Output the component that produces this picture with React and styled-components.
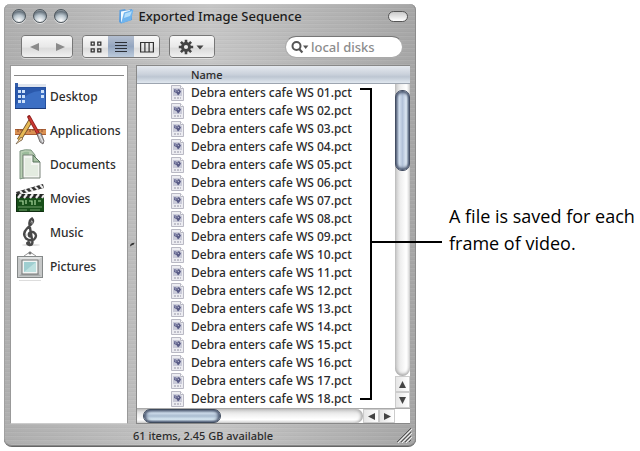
import { useState } from 'react';
import styled, { createGlobalStyle } from 'styled-components';

const places = [
  { name: 'Desktop', Icon: DesktopIcon },
  { name: 'Applications', Icon: ApplicationsIcon },
  { name: 'Documents', Icon: DocumentsIcon },
  { name: 'Movies', Icon: MoviesIcon },
  { name: 'Music', Icon: MusicIcon },
  { name: 'Pictures', Icon: PicturesIcon },
];

const files = Array.from({ length: 18 }, (_, i) => {
  return `Debra enters cafe WS ${String(i + 1).padStart(2, '0')}.pct`;
});

export default function App() {
  const [view, setView] = useState('list');
  const [search, setSearch] = useState('');

  return (
    <Page>
      <GlobalStyle />

      <Window>
        <TitleBar>
          <Lights>
            <Light aria-label="Close" />
            <Light aria-label="Minimize" />
            <Light aria-label="Zoom" />
          </Lights>
          <Title>
            <FolderIcon />
            Exported Image Sequence
          </Title>
          <Pill aria-label="Hide toolbar" />
        </TitleBar>

        <Toolbar>
          <ButtonGroup>
            <ToolButton $width={25} aria-label="Back">
              <svg width="10" height="10"><path d="M9 1v8L0 5z" fill="#8b8b8b" /></svg>
            </ToolButton>
            <ToolButton $width={25} aria-label="Forward">
              <svg width="10" height="10"><path d="M1 1v8l9-4z" fill="#8b8b8b" /></svg>
            </ToolButton>
          </ButtonGroup>

          <ButtonGroup>
            <ToolButton $width={25} $active={view === 'icon'} onClick={() => setView('icon')} aria-label="Icon view">
              <svg width="12" height="12" fill="none" stroke="#333" strokeWidth="1.3">
                <path d="M1.2 1.2h3v3h-3zM7.8 1.2h3v3h-3zM1.2 7.8h3v3h-3zM7.8 7.8h3v3h-3z" />
              </svg>
            </ToolButton>
            <ToolButton $width={26} $active={view === 'list'} onClick={() => setView('list')} aria-label="List view">
              <svg width="12" height="12" stroke="#2b2f36" strokeWidth="1.2">
                <path d="M0 1.5h12M0 4.5h12M0 7.5h12M0 10.5h12" />
              </svg>
            </ToolButton>
            <ToolButton $width={25} $active={view === 'column'} onClick={() => setView('column')} aria-label="Column view">
              <svg width="14" height="12" fill="none" stroke="#333" strokeWidth="1.2">
                <path d="M.6 1.5h12.8v9.5H.6zM4.9 1.5V11M9.1 1.5V11" />
              </svg>
            </ToolButton>
          </ButtonGroup>

          <ButtonGroup>
            <ToolButton $width={44} aria-label="Action">
              <GearIcon />
            </ToolButton>
          </ButtonGroup>

          <SearchBox>
            <svg width="18" height="14" fill="none" stroke="#555">
              <circle cx="5.5" cy="6" r="4" strokeWidth="2" />
              <path d="M8.2 9l3.2 3.4" strokeWidth="2.2" />
              <path d="M12 5.5h5.4L14.7 9z" fill="#555" stroke="none" />
            </svg>
            <SearchInput
              aria-label="Search"
              placeholder="local disks"
              value={search}
              onChange={e => setSearch(e.target.value)}
            />
          </SearchBox>
        </Toolbar>

        <Panes>
          <Sidebar>
            {
              places.map(({ name, Icon }) => (
                <Place key={name}>
                  <Icon />
                  {name}
                </Place>
              ))
            }
          </Sidebar>

          <Splitter>
            <svg width="5" height="5"><path d="M0 4.5Q0 .8 4.5.8Q4.5 3 2 3.2z" fill="#333" /></svg>
          </Splitter>

          <FilePane>
            <ListArea>
              <FileTable>
                <thead>
                  <tr>
                    <IconHead />
                    <NameHead>Name</NameHead>
                  </tr>
                </thead>
                <tbody>
                  {
                    files.map(file => (
                      <tr key={file}>
                        <IconCell><PictIcon /></IconCell>
                        <NameCell>{file}</NameCell>
                      </tr>
                    ))
                  }
                </tbody>
              </FileTable>

              <ScrollColumn>
                <HeadCap />
                <VerticalTrack>
                  <VerticalThumb />
                </VerticalTrack>
                <ArrowButton aria-label="Scroll up">
                  <svg width="7" height="7"><path d="M3.5 0L7 7H0z" fill="#444" /></svg>
                </ArrowButton>
                <ArrowButton aria-label="Scroll down">
                  <svg width="7" height="7"><path d="M3.5 7L7 0H0z" fill="#444" /></svg>
                </ArrowButton>
              </ScrollColumn>

              <Bracket />
            </ListArea>

            <ScrollRow>
              <HorizontalTrack>
                <HorizontalThumb />
              </HorizontalTrack>
              <ArrowButton aria-label="Scroll left">
                <svg width="7" height="7"><path d="M0 3.5L7 0v7z" fill="#444" /></svg>
              </ArrowButton>
              <ArrowButton aria-label="Scroll right">
                <svg width="7" height="7"><path d="M7 3.5L0 0v7z" fill="#444" /></svg>
              </ArrowButton>
              <Corner />
            </ScrollRow>
          </FilePane>
        </Panes>

        <StatusBar>
          <Status>61 items, 2.45 GB available</Status>
          <svg width="16" height="16" fill="none">
            <path d="M1 15L15 1M5 15L15 5M9 15l6-6M13 15l2-2" stroke="#555" />
            <path d="M2 16L16 2M6 16L16 6M10 16l6-6" stroke="#eee" />
          </svg>
        </StatusBar>
      </Window>

      <Caption>A file is saved for each frame of video.</Caption>
    </Page>
  );
}

function FolderIcon() {
  return (
    <svg width="16" height="16" viewBox="0 0 16 16">
      <path d="M1.5 2L7 1l1 1.5 6-1.5v11L3 15.5 1 14z" fill="#5f9fdc" />
      <path d="M3 3.5L12 2v10L3 14z" fill="#f2faff" />
      <path d="M6 4.5L15.5 1.5 13 12 3 15.5z" fill="#6fb4ee" />
      <path d="M7 5.5L14 3.2 12 8 6 10z" fill="#b4defb" />
    </svg>
  );
}

function GearIcon() {
  return (
    <svg width="28" height="16" viewBox="0 0 28 16">
      <g stroke="#444" strokeWidth="2.6">
        <path d="M8 .8v14.4M.8 8h14.4M2.9 2.9l10.2 10.2M13.1 2.9L2.9 13.1" />
      </g>
      <circle cx="8" cy="8" r="5" fill="#444" />
      <circle cx="8" cy="8" r="2.1" fill="#eee" />
      <path d="M18.5 6.5h7L22 10.5z" fill="#444" />
    </svg>
  );
}

function PictIcon() {
  return (
    <svg width="13" height="16" viewBox="0 0 13 16">
      <path d="M.5.5h9l3 3v12H.5z" fill="#ececf1" stroke="#b9b9c4" />
      <path d="M9.5.5v3h3" fill="#fff" stroke="#b9b9c4" />
      <path d="M2 3h6l3 2v6H2z" fill="#c9cad8" />
      <path d="M3 4l3 1 2-1 2 2.5L8.5 9 7 10.5 5.5 8 3 7z" fill="#585a85" />
      <path d="M3 4l2 .5 1 2-2 .5z" fill="#8d8fb0" />
      <path d="M6.5 5l1.5 1.5-1 .8z" fill="#d9daea" />
      <path d="M3 13h7" stroke="#9494a4" strokeDasharray="2 1" />
    </svg>
  );
}

function DesktopIcon() {
  return (
    <svg width="31" height="26" viewBox="0 0 31 26">
      <rect y="1" width="31" height="25" fill="#244f9f" />
      <path d="M1 5h29v20H1z" fill="#2b59ac" />
      <path d="M1 22Q14 6 30 8v17H1z" fill="#3c6fc4" />
      <path d="M0 1h31v3H0z" fill="#dfe5ee" />
      <path d="M0 0h3v4H0z" fill="#315ca8" />
      <path d="M3 7h3v3H3zM7 7h3v3H7zM3 12h3v3H3zM7 12h3v3H7zM3 17h3v3H3zM7 17h3v3H7zM26 7h3v3h-3zM26 12h3v3h-3z" fill="#cde1fa" />
      <path d="M0 25.5h31" stroke="#1c3b79" />
    </svg>
  );
}

function ApplicationsIcon() {
  return (
    <svg width="31" height="30" viewBox="0 0 31 30">
      <path d="M0 14h31v6H0z" fill="#d99152" />
      <path d="M0 14.5h31M0 19.5h31" stroke="#a85f35" />
      <path d="M3 14v3M6 14v2M9 14v3M12 14v2M15 14v3M18 14v2M21 14v3M24 14v2M27 14v3" stroke="#8d4c2c" />
      <path d="M16 5L4 25" stroke="#71512a" strokeWidth="4.6" />
      <path d="M16 5L4 25" stroke="#e6b955" strokeWidth="3" />
      <path d="M6 22l-5 7 7-5z" fill="#f4d5a1" stroke="#5b4630" strokeWidth=".6" />
      <path d="M14 2l10 18" stroke="#8e1c1c" strokeWidth="3.6" strokeLinecap="round" />
      <path d="M14 2l10 18" stroke="#c93a32" strokeWidth="1.8" />
      <path d="M22 19l4-1 3 8-1 3-3-2z" fill="#b4b4b6" stroke="#5a5454" strokeWidth=".8" />
      <path d="M24 19l4 8" stroke="#f1f1f1" />
    </svg>
  );
}

function DocumentsIcon() {
  return (
    <svg width="26" height="31" viewBox="0 0 26 31">
      <path d="M3 2Q8 0 14 1l4 5v20Q10 28 3 30z" fill="#b8ceb3" stroke="#7c9480" />
      <path d="M5 4Q9 2 12 3v23l-7 2z" fill="#9bbb9a" />
      <path d="M6 6h10l7 7v16H6z" fill="#f3f5f1" stroke="#7b847b" />
      <path d="M16 6v7h7z" fill="#a8c2a4" stroke="#57725b" />
      <path d="M8 9h6v7h7v11H8z" fill="#e3ebe0" />
    </svg>
  );
}

function MoviesIcon() {
  return (
    <svg width="30" height="30" viewBox="0 0 30 30">
      <path d="M1 9L28 1l1 4L2 12z" fill="#333" />
      <path d="M5 8l3 3M10 6.5l3 3M15 5l3 3M20 3.5l3 3M25 2l3 3" stroke="#eee" strokeWidth="2" />
      <path d="M1 11h28v18H1z" fill="#174f19" />
      <path d="M1 11h28v4H1z" fill="#252825" />
      <path d="M6 11l-3 4M12 11l-3 4M18 11l-3 4M24 11l-3 4M29 12l-2 3" stroke="#ececec" strokeWidth="2.2" />
      <path d="M4 18h4v4M11 17v4M14 18h3v4M20 17v5M23 18h3" stroke="#a9d59d" strokeWidth="1.2" fill="none" />
      <path d="M3 24h24M4 27h8M15 27h10" stroke="#719d6a" />
      <path d="M1.5 12v16.5h27" stroke="#102d11" fill="none" />
    </svg>
  );
}

function MusicIcon() {
  return (
    <svg width="28" height="30" viewBox="0 0 28 30">
      <ellipse cx="15" cy="28" rx="9" ry="1" fill="#ddd" />
      <path
        d="M15 19.5q-3 0-2-3 2-3 5-1 4 3 0 7-4 2-8-1-4-5 1-10l4-4Q18.500 4 16 1.500 13 3 13.500 8L16.500 25q0 3-3 3-3-.5-2-2.500"
        fill="none"
        stroke="#484848"
        strokeWidth="2.4"
      />
      <circle cx="12.500" cy="26" r="2" fill="#484848" />
      <path d="M16.500 4l-.5 3M9.500 16l.5 3" stroke="#999" />
    </svg>
  );
}

function PicturesIcon() {
  return (
    <svg width="28" height="31" viewBox="0 0 28 31">
      <path d="M8 5l6-4 6 4" fill="none" stroke="#999" />
      <circle cx="14" cy="2" r="1.5" fill="#777" />
      <rect x="1.5" y="5.5" width="25" height="21" fill="#c6c8c8" stroke="#858989" />
      <path d="M2 6l5 4h14l5-4" fill="#e1e3e3" />
      <path d="M3 25l4-4h14l4 4" fill="#a9adad" />
      <rect x="6" y="9" width="16" height="14" fill="#f1f5f4" stroke="#777" />
      <path d="M8 11h12v10H8z" fill="#9fced0" />
      <path d="M8 21L20 11v10z" fill="#bde0df" />
      <path d="M3 29.5h22" stroke="#ddd" />
    </svg>
  );
}

const GlobalStyle = createGlobalStyle`
  * {
    box-sizing: border-box;
  }

  body {
    margin: 0;
    background: #fff;
  }

  button {
    padding: 0;
    border: none;
    background: none;
    font: inherit;
    color: inherit;
  }

  svg {
    display: block;
    flex-shrink: 0;
  }
`;

const Page = styled.main`
  display: flex;
  align-items: center;
  gap: 33px;
  padding: 4px 0 4px 4px;
  font-family: 'Noto Sans', 'Open Sans', sans-serif;
  font-size: 12px;
  font-weight: 500;
  color: #2c2c2c;
`;

const Window = styled.section`
  flex: 1;
  min-width: 0;
  padding: 0 6px;
  border: solid #666;
  border-width: 0 0 1px;
  border-radius: 6px 6px 8px 8px;
  box-shadow: inset 1px 0 #a0a0a0, inset -1px 0 #8c8c8c, inset 0 -1px #888;
  background-color: #b4b4b4;
  background-image:
    repeating-linear-gradient(rgba(255, 255, 255, 0.07) 0 1px, transparent 1px 3px, rgba(0, 0, 0, 0.02) 3px 4px),
    linear-gradient(to right, rgba(0, 0, 0, 0.03), rgba(255, 255, 255, 0.24) 50%, rgba(0, 0, 0, 0.08));
`;

const TitleBar = styled.header`
  display: grid;
  grid-template-columns: 1fr auto 1fr;
  align-items: center;
  height: 24px;
`;

const Lights = styled.div`
  display: flex;
  gap: 7px;
  padding-left: 2px;
`;

const Light = styled.button`
  width: 14px;
  height: 14px;
  border: 1px solid #4c555c;
  border-radius: 50%;
  background: radial-gradient(circle at 50% 90%, #fff, #b9c5cd 45%, #66727c 75%, #d2d9de);
  box-shadow: 0 1px rgba(255, 255, 255, 0.6);
`;

const Title = styled.h1`
  display: flex;
  align-items: center;
  gap: 4px;
  margin: 0;
  font-size: 13px;
  font-weight: 500;
  color: #1c1c1c;
  white-space: nowrap;
`;

const Pill = styled.button`
  justify-self: end;
  width: 20px;
  height: 11px;
  margin-right: 2px;
  border: 1px solid #555;
  border-radius: 6px;
  background: linear-gradient(#c9c9c9, #fff);
`;

const Toolbar = styled.div`
  display: flex;
  align-items: center;
  gap: 9px;
  height: 37px;
  padding: 0 7px 0 11px;
`;

const ButtonGroup = styled.div`
  display: flex;
  border: 1px solid #777;
  border-radius: 4px;
  overflow: hidden;
  box-shadow: 0 1px rgba(255, 255, 255, 0.5);
`;

const ToolButton = styled.button`
  display: flex;
  align-items: center;
  justify-content: center;
  width: ${props => props.$width}px;
  height: 21px;
  background: ${props => props.$active
    ? 'linear-gradient(#b4bfd0, #93a5bf 50%, #bccbdc)'
    : 'linear-gradient(#f8f8f8, #e9e9e9 50%, #dcdcdc 60%, #f1f1f1)'};
`;

const SearchBox = styled.label`
  display: flex;
  align-items: center;
  gap: 2px;
  width: 118px;
  height: 22px;
  margin-left: auto;
  padding: 0 5px;
  border: 1px solid #aaa;
  border-top-color: #777;
  border-radius: 11px;
  background: #fff;
`;

const SearchInput = styled.input`
  flex: 1;
  min-width: 0;
  padding: 0;
  border: none;
  outline: none;
  background: none;
  font: inherit;
  font-size: 13px;

  &::placeholder {
    color: #8c8c8c;
  }
`;

const Panes = styled.div`
  display: flex;
`;

const Sidebar = styled.nav`
  width: 118px;
  padding: 13px 3px;
  border: 1px solid #999;
  border-bottom-color: #ccc;
  background: #fff;

  &::before {
    content: '';
    display: block;
    height: 1px;
    margin: -4px 0 3px;
    background: #888;
  }
`;

const Place = styled.button`
  display: grid;
  grid-template-columns: 32px 1fr;
  align-items: center;
  gap: 4px;
  width: 100%;
  height: 34px;
  text-align: left;

  svg {
    justify-self: center;
  }
`;

const Splitter = styled.div`
  display: flex;
  align-items: center;
  justify-content: center;
  width: 8px;
`;

const FilePane = styled.div`
  flex: 1;
  min-width: 0;
  border: solid #888;
  border-width: 1px 0 1px 1px;
  background: #fff;
`;

const ListArea = styled.div`
  display: flex;
  position: relative;
`;

const FileTable = styled.table`
  flex: 1;
  border-collapse: collapse;
  table-layout: fixed;
  line-height: 18px;
  white-space: nowrap;
`;

const headFill = 'linear-gradient(#e5e9ef, #cbd2dc 45%, #bdc6d2 60%, #e6edf4)';

const IconHead = styled.td`
  width: 54px;
  height: 18px;
  padding: 0;
  background: ${headFill};
  box-shadow: inset 0 -1px #9da5b0;
`;

const NameHead = styled.th`
  height: 18px;
  padding: 0;
  background: ${headFill};
  box-shadow: inset 0 -1px #9da5b0;
  font-size: 11px;
  font-weight: 500;
  text-align: left;
`;

const IconCell = styled.td`
  height: 18px;
  padding: 0 0 0 34px;
`;

const NameCell = styled.td`
  height: 18px;
  padding: 0;
`;

const ScrollColumn = styled.div`
  display: flex;
  flex-direction: column;
  width: 15px;
`;

const HeadCap = styled.div`
  height: 18px;
  background: ${headFill};
  box-shadow: inset 0 -1px #9da5b0;
`;

const VerticalTrack = styled.div`
  flex: 1;
  padding-top: 6px;
  border-radius: 0 0 8px 8px;
  background: linear-gradient(to right, #c9c9c9, #eee 35%, #fff 75%, #e4e4e4);
  box-shadow: inset 0 -2px 3px #aaa;
`;

const VerticalThumb = styled.div`
  height: 81px;
  border: 1px solid #444e63;
  border-radius: 7px;
  background: linear-gradient(to right, #7d8ba3, #d3dfee 25%, #b3c2d9 50%, #e0eaf5 80%, #8292ab);
  box-shadow: inset 0 2px 3px #4c5870, inset 0 -2px 3px #4c5870;
`;

const ArrowButton = styled.button`
  display: flex;
  align-items: center;
  justify-content: center;
  width: 15px;
  height: 16px;
  border: 1px solid #ccc;
  background: linear-gradient(to right, #e6e6e6, #fff);
`;

const ScrollRow = styled.div`
  display: flex;
  height: 15px;
  border-top: 1px solid #aaa;

  ${ArrowButton} {
    width: 16px;
    height: 14px;
  }
`;

const HorizontalTrack = styled.div`
  flex: 1;
  padding-left: 6px;
  border-radius: 0 8px 8px 0;
  background: linear-gradient(#ccc, #eee 35%, #fff 75%, #e4e4e4);
  box-shadow: inset -2px 0 3px #aaa;
`;

const HorizontalThumb = styled.div`
  width: 78px;
  height: 14px;
  border: 1px solid #3f4b5d;
  border-radius: 7px;
  background: linear-gradient(#7a899f, #cbd9e8 25%, #a9bcd0 50%, #dcecf6 80%, #8292ab);
  box-shadow: inset 2px 0 3px #4c5870, inset -2px 0 3px #4c5870;
`;

const Corner = styled.div`
  width: 15px;
  background: #fff;
`;

/* callout lines drawn over the file list */
const Bracket = styled.div`
  position: absolute;
  top: 22px;
  bottom: 8px;
  left: 223px;
  width: 12px;
  border: solid #000;
  border-width: 2px 2px 2px 0;

  &::after {
    content: '';
    position: absolute;
    top: 49%;
    left: 100%;
    width: 72px;
    height: 2px;
    background: #000;
  }
`;

const StatusBar = styled.footer`
  display: flex;
  align-items: center;
  height: 22px;
  font-size: 11px;

  svg {
    margin-right: -2px;
  }
`;

const Status = styled.span`
  flex: 1;
  text-align: center;
`;

const Caption = styled.p`
  width: 191px;
  margin: 8px 0 0;
  font-family: 'Open Sans', 'Noto Sans', sans-serif;
  font-size: 18px;
  font-weight: 400;
  line-height: 27px;
  color: #000;
`;
